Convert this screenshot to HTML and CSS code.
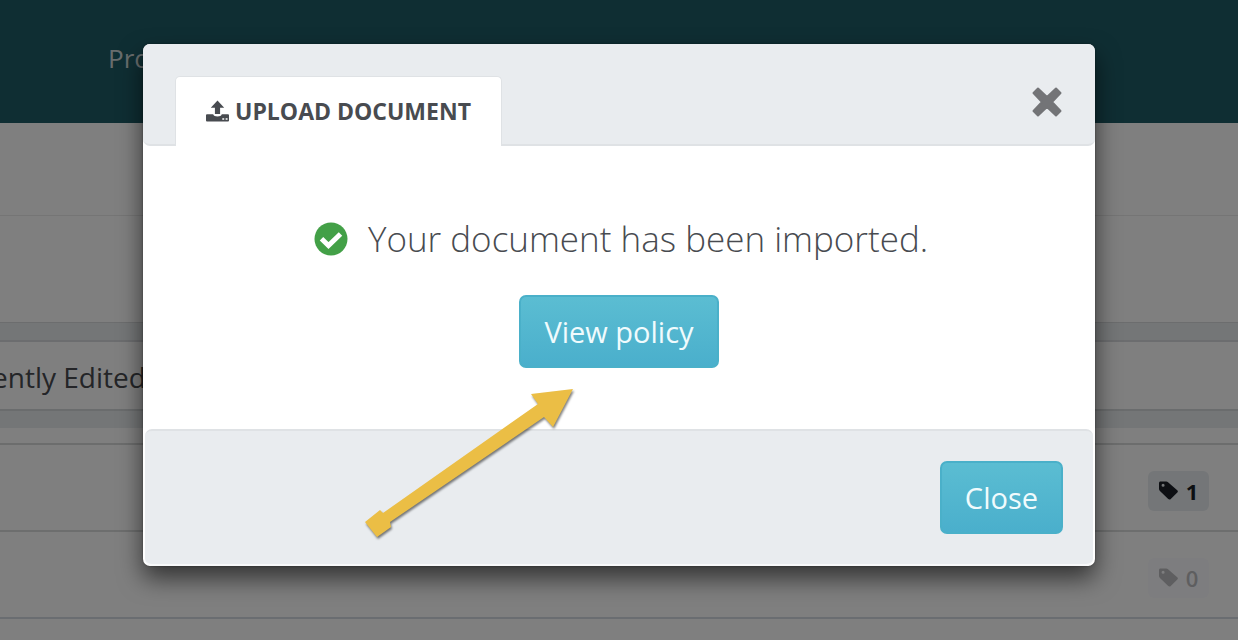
FILE: index.html
```html
<!DOCTYPE html>
<html lang="en">
<head>
<meta charset="utf-8">
<meta name="viewport" content="width=device-width, initial-scale=1">
<title>Upload document</title>
<link rel="stylesheet" href="styles.css">
</head>
<body>
<svg class="symbols" aria-hidden="true">
  <symbol id="tag" viewBox="0 0 20 20">
    <path fill-rule="evenodd" d="M1.500 .5h6.200c.7 0 1.300.3 1.800.8l9.700 8.400c.8.800.9 1.700.1 2.500l-6.900 6.700c-.8.800-1.900.800-2.700.1L1 10.500c-.6-.6-1-1.300-1-2.100V2.100C0 1.200.700 .5 1.500 .5zM4.300 2.900a1.600 1.600 0 1 0 0 3.200 1.600 1.600 0 0 0 0-3.200z"/>
  </symbol>
</svg>
<div class="page">
  <nav class="navbar"><a class="nav-link" href="#">Pro</a></nav>
  <main>
    <div class="panel toolbar"></div>
    <div class="panel filters"></div>
    <h2 class="section-title">ently Edited</h2>
    <section class="list">
      <div class="list-head"></div>
      <div class="list-row"><span class="badge"><svg class="tag-icon"><use href="#tag"/></svg>1</span></div>
      <div class="list-row"><span class="badge badge-empty"><svg class="tag-icon"><use href="#tag"/></svg>0</span></div>
    </section>
  </main>
</div>
<div class="overlay">
  <div class="modal" role="dialog" aria-modal="true" aria-labelledby="upload-tab">
    <header class="modal-header">
      <div class="tab" id="upload-tab">
        <svg class="upload-icon" viewBox="0 0 24 22" aria-hidden="true">
          <path fill-rule="evenodd" d="M12 0l7 7.500h-4.300V14H9.300V7.500H5zM1 14.500h6.500c.4 1.500 2.200 2.300 4.500 2.300s4.100-.8 4.500-2.300H23c.6 0 1 .4 1 1V21c0 .6-.4 1-1 1H1c-.6 0-1-.4-1-1v-5.500c0-.6.4-1 1-1zM17 18.500V20h2v-1.500zM20.500 18.500V20h2v-1.500z"/>
        </svg>
        <span>UPLOAD DOCUMENT</span>
      </div>
      <button class="dismiss" type="button" aria-label="Dismiss">
        <svg class="dismiss-icon" viewBox="0 0 32 32" aria-hidden="true">
          <path d="M7 2.500L16 11l9-8.500 4.500 4.500L21 16l8.500 9-4.500 4.500L16 21l-9 8.500L2.500 25 11 16 2.500 7z"/>
        </svg>
      </button>
    </header>
    <div class="modal-body">
      <p class="message">
        <svg class="check-icon" viewBox="0 0 34 34" aria-hidden="true">
          <circle cx="17" cy="17" r="16.500"/>
          <path d="M7.500 16.800l7 6.700L26.500 12"/>
        </svg>
        <span>Your document has been imported.</span>
      </p>
      <button class="button" type="button">View policy</button>
    </div>
    <footer class="modal-footer">
      <button class="button" type="button">Close</button>
    </footer>
    <svg class="arrow" viewBox="0 0 210 150" aria-hidden="true">
      <polygon points="208,1 166,6 173,16 18,125 15,122 0,134 12,149 26,139 25,134 179,29 188,39"/>
    </svg>
  </div>
</div>
</body>
</html>
```
FILE: styles.css
```css
* { box-sizing: border-box; }
body {
  margin: 0;
  min-height: 100vh;
  position: relative;
  overflow: hidden;
  background: #fff;
  color: #484b50;
  font-family: "Open Sans", "Noto Sans", sans-serif;
}
.symbols { display: none; }
.page { background: #fff; }

.navbar {
  display: flex;
  align-items: center;
  height: 123px;
  padding: 0 108px 8px;
  background: #1e5c66;
}
.nav-link { color: #d0d8da; font-size: 26px; text-decoration: none; }
.panel { border-bottom: 1px solid #eaeaea; }
.toolbar { height: 93px; }
.filters { height: 107px; border-color: #d8dadd; }
.section-title {
  height: 71px;
  margin: 17px 0;
  border-top: 2px solid #d8dade;
  border-bottom: 2px solid #d4d8da;
  background: #fff;
  font-size: 28px;
  font-weight: 400;
  line-height: 70px;
  text-indent: -8px;
}
main { background: #e8ecef; }
.panel, .list { background: #fff; }
.list-head { height: 17px; border-bottom: 2px solid #d8dadb; }
.list-row {
  display: flex;
  justify-content: flex-end;
  align-items: center;
  height: 87px;
  padding: 6px 29px 0 0;
  border-bottom: 2px solid #dadcdd;
}
.list-row:last-child { border-color: #d4dbe2; }
.badge {
  display: flex;
  align-items: center;
  justify-content: center;
  gap: 8px;
  width: 61px;
  height: 40px;
  border-radius: 6px;
  background: #e8edf0;
  color: #1a1f27;
  font-size: 22px;
  font-weight: 700;
}
.tag-icon { width: 19px; height: 19px; fill: currentColor; }
.badge-empty { background: #fbfbfe; color: #bdbdc0; font-weight: 600; }

.overlay {
  position: absolute;
  inset: 0;
  display: flex;
  justify-content: center;
  align-items: flex-start;
  padding: 44px 24px 0;
  background: rgba(0, 0, 0, .5);
}
.modal {
  position: relative;
  width: 100%;
  max-width: 952px;
  border-radius: 7px;
  background: #fff;
  box-shadow: 0 12px 24px rgba(0, 0, 0, .6), 0 0 2px rgba(0, 0, 0, .4);
}
.modal-header {
  display: flex;
  justify-content: space-between;
  align-items: flex-start;
  height: 102px;
  padding: 32px 32px 0;
  border-bottom: 2px solid #dfe2e5;
  border-radius: 7px;
  background: #e9ecef;
}
.tab {
  display: flex;
  align-items: center;
  gap: 6px;
  height: 70px;
  padding: 0 30px 2px;
  border: 1px solid #dfe2e5;
  border-bottom: 0;
  border-radius: 5px 5px 0 0;
  background: #fff;
  font-size: 23px;
  font-weight: 700;
  white-space: nowrap;
}
.upload-icon { width: 23px; height: 22px; fill: currentColor; }
.dismiss { margin: 10px 0 0; padding: 0; border: 0; background: none; line-height: 0; }
.dismiss-icon {
  width: 32px;
  height: 32px;
  fill: #737477;
  stroke: #737477;
  stroke-width: 2;
  stroke-linejoin: round;
}
.modal-body {
  display: flex;
  flex-direction: column;
  align-items: center;
  gap: 32px;
  padding: 68px 24px 61px;
}
.message {
  display: flex;
  align-items: center;
  gap: 20px;
  margin: 0;
  padding-left: 4px;
  font-size: 35px;
  font-weight: 300;
  line-height: 49px;
  white-space: nowrap;
}
.check-icon { width: 34px; height: 34px; }
.check-icon circle { fill: #43a047; }
.check-icon path { fill: none; stroke: #fff; stroke-width: 5; }
.button {
  height: 73px;
  padding: 0 23px;
  border: 2px solid #4ab0c9;
  border-radius: 7px;
  background: linear-gradient(#5bbdd2, #4aafcc);
  color: #f0fbfd;
  font: inherit;
  font-size: 29px;
}
.modal-footer {
  display: flex;
  justify-content: flex-end;
  margin: 0 2px;
  padding: 30px;
  border-top: 2px solid #dfe2e5;
  border-bottom: 2px solid #f8f9fa;
  border-radius: 7px;
  background: #e9ecef;
}
.arrow {
  position: absolute;
  left: 222px;
  top: 344px;
  width: 210px;
  height: 150px;
  overflow: visible;
  fill: #ebbe45;
  filter: drop-shadow(1px 2px 1px rgba(0, 0, 0, .5));
}
```
